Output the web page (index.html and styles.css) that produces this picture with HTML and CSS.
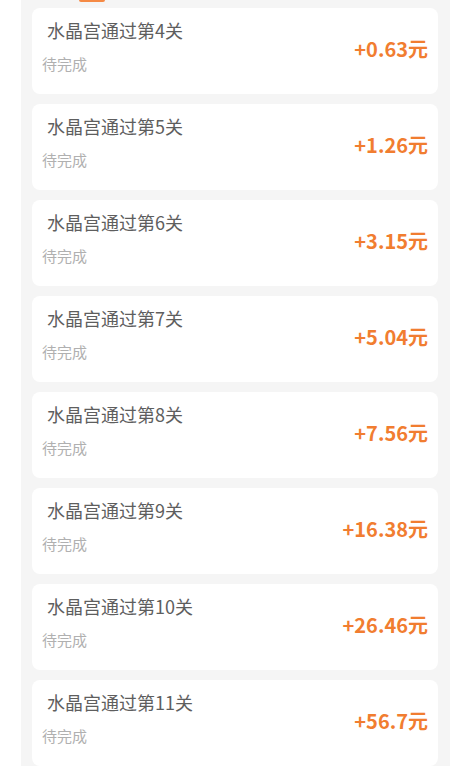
FILE: index.html
```html
<!DOCTYPE html>
<html lang="zh">
<head>
<meta charset="utf-8">
<link rel="stylesheet" href="styles.css">
</head>
<body>
<div class="panel">
  <div class="top"><span class="tab"></span></div>
  <div class="card"><div class="info"><div class="title">水晶宫通过第4关</div><div class="sub">待完成</div></div><div class="amount">+0.63元</div></div>
  <div class="card"><div class="info"><div class="title">水晶宫通过第5关</div><div class="sub">待完成</div></div><div class="amount">+1.26元</div></div>
  <div class="card"><div class="info"><div class="title">水晶宫通过第6关</div><div class="sub">待完成</div></div><div class="amount">+3.15元</div></div>
  <div class="card"><div class="info"><div class="title">水晶宫通过第7关</div><div class="sub">待完成</div></div><div class="amount">+5.04元</div></div>
  <div class="card"><div class="info"><div class="title">水晶宫通过第8关</div><div class="sub">待完成</div></div><div class="amount">+7.56元</div></div>
  <div class="card"><div class="info"><div class="title">水晶宫通过第9关</div><div class="sub">待完成</div></div><div class="amount">+16.38元</div></div>
  <div class="card"><div class="info"><div class="title">水晶宫通过第10关</div><div class="sub">待完成</div></div><div class="amount">+26.46元</div></div>
  <div class="card"><div class="info"><div class="title">水晶宫通过第11关</div><div class="sub">待完成</div></div><div class="amount">+56.7元</div></div>
</div>
</body>
</html>
```
FILE: styles.css
```css
html, body {
  margin: 0;
  padding: 0;
  background: #ffffff;
  height: 767px;
  overflow: hidden;
  font-family: "Noto Sans CJK SC", "Noto Sans", sans-serif;
}
.panel {
  margin-left: 21px;
  background: #f5f5f5;
  padding: 0 12px 0 11px;
  height: 766px;
  overflow: hidden;
}
.top {
  height: 8px;
  display: flex;
}
.tab {
  width: 26px;
  height: 2px;
  margin-left: 47px;
  background: #f58a45;
  border-radius: 0 0 2px 2px;
}
.card {
  height: 86px;
  margin-bottom: 10px;
  background: #ffffff;
  border-radius: 8px;
  display: flex;
  justify-content: space-between;
  align-items: flex-start;
  padding: 0 10px;
  box-sizing: border-box;
}
.info {
  display: flex;
  flex-direction: column;
  padding-top: 10px;
}
.title {
  font-size: 18px;
  line-height: 24px;
  color: #5e5e5e;
  margin-left: 5px;
}
.sub {
  margin-top: 12px;
  font-size: 15px;
  line-height: 20px;
  color: #b0b0b0;
}
.amount {
  margin-top: 28px;
  font-size: 20px;
  line-height: 26px;
  font-weight: bold;
  color: #f17d30;
}
```
